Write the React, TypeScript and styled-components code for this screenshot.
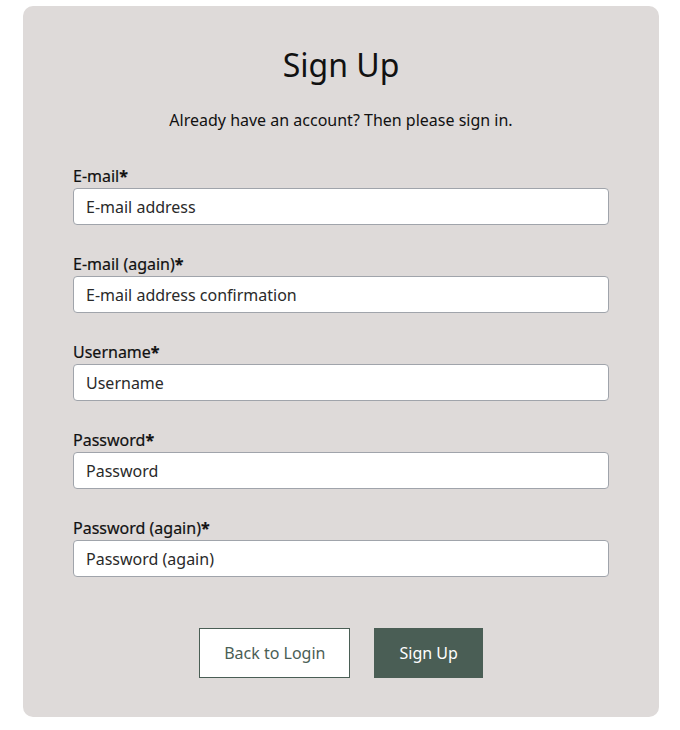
import React from "react";
import styled, { createGlobalStyle } from "styled-components";

const Global = createGlobalStyle`
  html, body { margin: 0; padding: 0; background: #ffffff; }
  body { font-family: "Noto Sans", "Open Sans", sans-serif; color: #111; }
  * { box-sizing: border-box; }
`;

const Page = styled.div`
  padding: 6px 21px 12px 23px;
`;

const Card = styled.div`
  background: #dedad9;
  border-radius: 10px;
  padding: 39px 50px 40px 50px;
  display: flex;
  flex-direction: column;
  align-items: stretch;
  height: 711px;
`;

const Title = styled.h1`
  margin: 0;
  text-align: center;
  font-size: 32px;
  font-weight: 400;
  line-height: 40px;
  color: #111;
`;

const Sub = styled.p`
  margin: 24px 0 0;
  text-align: center;
  font-size: 16px;
  line-height: 22px;
  color: #111;
`;

const Form = styled.form`
  margin-top: 34px;
  display: flex;
  flex-direction: column;
  gap: 28px;
`;

const Field = styled.div`
  display: flex;
  flex-direction: column;
  gap: 1px;
`;

const Label = styled.label`
  font-size: 16px;
  line-height: 22px;
  font-weight: 400;
  color: #111;
  -webkit-text-stroke: 0.2px #111;
`;

const Req = styled.strong`
  font-weight: 700;
`;

const Input = styled.input`
  width: 100%;
  height: 37px;
  border: 1px solid #a0a4ab;
  border-radius: 4px;
  background: #fff;
  padding: 0 12px;
  font-family: "Noto Sans", "Open Sans", sans-serif;
  font-size: 16px;
  color: #2a2a2a;
  &::placeholder { color: #2a2a2a; opacity: 1; }
`;

const Actions = styled.div`
  margin-top: 51px;
  display: flex;
  justify-content: center;
  gap: 24px;
`;

const Button = styled.button<{ $primary?: boolean }>`
  height: 50px;
  padding: 0 24px;
  font-family: "Noto Sans", "Open Sans", sans-serif;
  font-size: 16px;
  border: 1px solid #4a5e55;
  background: ${(p) => (p.$primary ? "#4a5e55" : "#ffffff")};
  color: ${(p) => (p.$primary ? "#ffffff" : "#4a5e55")};
  cursor: pointer;
`;

const fields = [
  { label: "E-mail", placeholder: "E-mail address" },
  { label: "E-mail (again)", placeholder: "E-mail address confirmation" },
  { label: "Username", placeholder: "Username" },
  { label: "Password", placeholder: "Password" },
  { label: "Password (again)", placeholder: "Password (again)" },
];

export default function App() {
  return (
    <>
      <Global />
      <Page>
        <Card>
          <Title>Sign Up</Title>
          <Sub>Already have an account? Then please sign in.</Sub>
          <Form onSubmit={(e) => e.preventDefault()}>
            {fields.map((f) => (
              <Field key={f.label}>
                <Label>
                  {f.label}
                  <Req>*</Req>
                </Label>
                <Input placeholder={f.placeholder} />
              </Field>
            ))}
          </Form>
          <Actions>
            <Button type="button">Back to Login</Button>
            <Button type="button" $primary>Sign Up</Button>
          </Actions>
        </Card>
      </Page>
    </>
  );
}
